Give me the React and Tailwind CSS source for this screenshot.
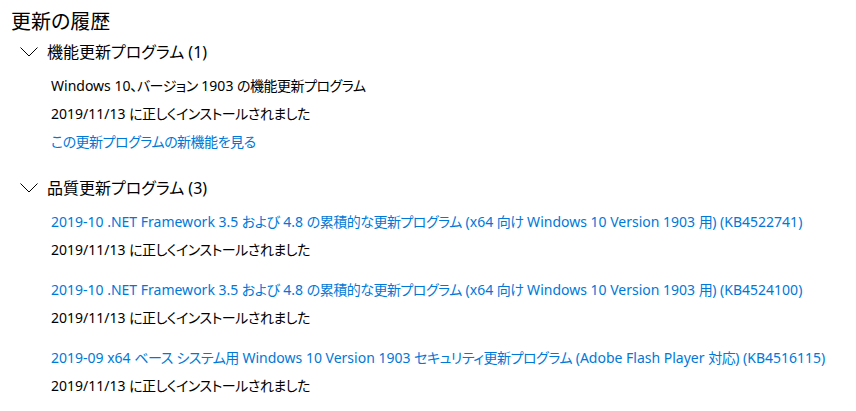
import React from 'react';

// narrow the CJK runs a bit so kana widths come close to Yu Gothic UI
const Jp = ({ text }) =>
  text.split(/([\u3000-\u30ff\u3400-\u9fff\uff00-\uffef]+)/).map((part, i) =>
    i % 2 === 1 ? (
      <span key={i} className="tracking-[-0.5px]">{part}</span>
    ) : (
      <React.Fragment key={i}>{part}</React.Fragment>
    )
  );

const ChevronDown = () => (
  <svg width="18" height="10" viewBox="0 0 18 10" className="shrink-0">
    <path d="M0.5 0.5 L9 9 L17.5 0.5" fill="none" stroke="#000" strokeWidth="1" />
  </svg>
);

const Section = ({ title, children, className }) => (
  <div className={className}>
    <div className="flex items-center h-[28px] pl-[9px]">
      <ChevronDown />
      <span className="ml-[9px] text-[16px] leading-[28px]">{title}</span>
    </div>
    {children}
  </div>
);

const Installed = () => (
  <div className="h-[28px] leading-[28px] whitespace-nowrap">
    <Jp text="2019/11/13 に正しくインストールされました" />
  </div>
);

const UpdateLink = ({ text }) => (
  <a href="#" className="block h-[28px] leading-[28px] text-[#0078d7] whitespace-nowrap">
    <Jp text={text} />
  </a>
);

const quality = [
  '2019-10 .NET Framework 3.5 および 4.8 の累積的な更新プログラム (x64 向け Windows 10 Version 1903 用) (KB4522741)',
  '2019-10 .NET Framework 3.5 および 4.8 の累積的な更新プログラム (x64 向け Windows 10 Version 1903 用) (KB4524100)',
  '2019-09 x64 ベース システム用 Windows 10 Version 1903 セキュリティ更新プログラム (Adobe Flash Player 対応) (KB4516115)',
];

export default function App() {
  return (
    <div
      className="w-[856px] h-[411px] overflow-hidden bg-white text-black pl-[11px] pt-[8px] [font-feature-settings:'palt']"
      style={{ fontFamily: '"Noto Sans", "Noto Sans CJK JP", sans-serif' }}
    >
      <h1 className="text-[20px] leading-[28px]">更新の履歴</h1>

      {/* 機能更新 */}
      <Section title="機能更新プログラム (1)" className="mt-[2px]">
        <div className="pl-[40px] mt-[6px] text-[14px]">
          <div className="h-[28px] leading-[28px] whitespace-nowrap">
            <Jp text="Windows 10、バージョン 1903 の機能更新プログラム" />
          </div>
          <Installed />
          <UpdateLink text="この更新プログラムの新機能を見る" />
        </div>
      </Section>

      {/* 品質更新 */}
      <Section title="品質更新プログラム (3)" className="mt-[18px]">
        <div className="pl-[40px] mt-[6px] text-[14px] flex flex-col gap-[12px]">
          {quality.map((q) => (
            <div key={q}>
              <UpdateLink text={q} />
              <Installed />
            </div>
          ))}
        </div>
      </Section>
    </div>
  );
}
